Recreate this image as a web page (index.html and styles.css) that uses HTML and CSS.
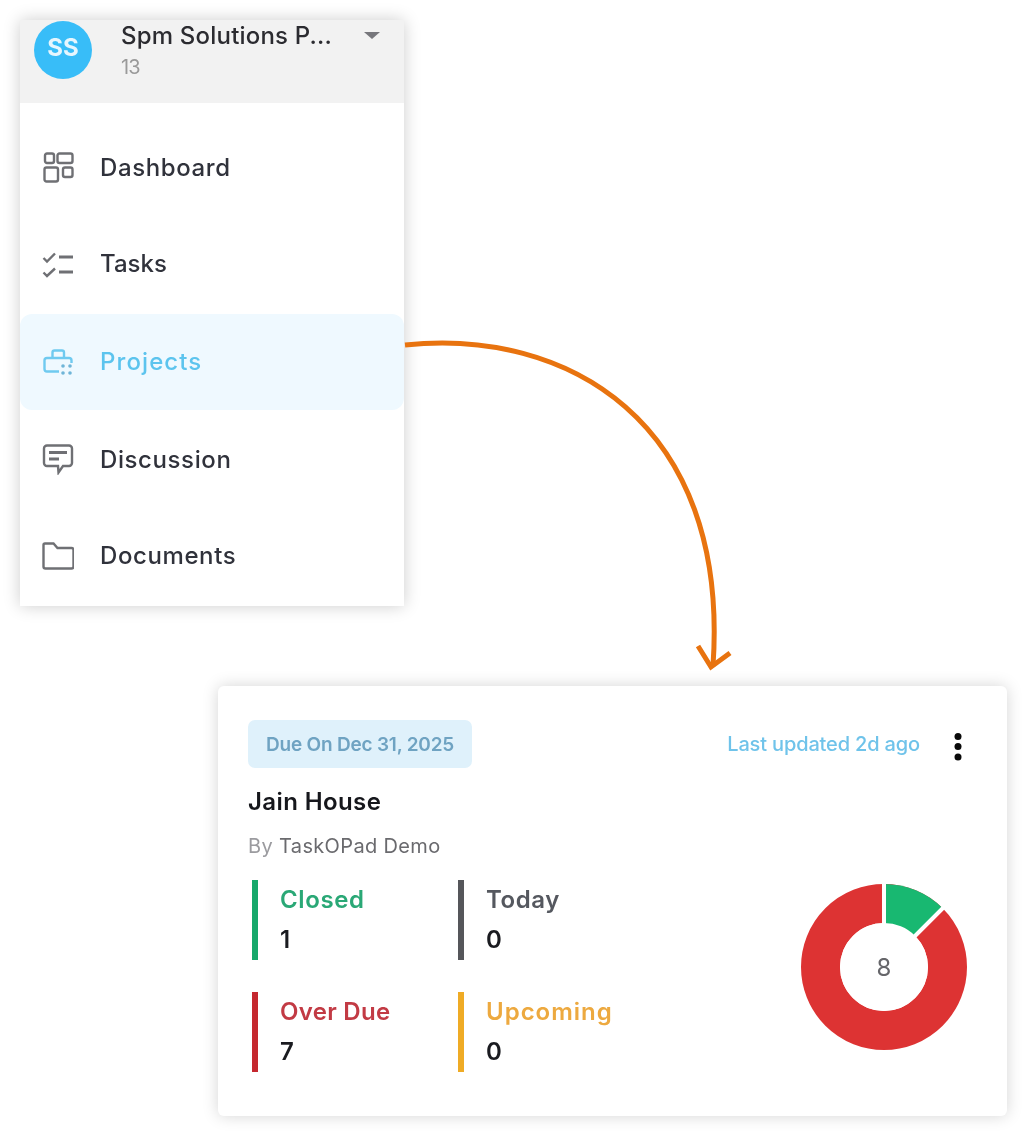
FILE: index.html
```html
<!DOCTYPE html>
<html lang="en">
<head>
<meta charset="utf-8">
<title>Projects</title>
<link rel="stylesheet" href="styles.css">
</head>
<body>
<main class="canvas">
  <aside class="sidebar">
    <header class="org">
      <div class="avatar">SS</div>
      <div class="org-text">
        <div class="org-name">Spm Solutions P...</div>
        <div class="org-id">13</div>
      </div>
      <svg class="caret" width="16" height="7" viewBox="0 0 16 7"><path d="M0 0H16L8 7Z"/></svg>
    </header>
    <nav class="nav">
      <a class="nav-item">
        <svg class="icon" width="32" height="32" viewBox="0 0 32 32"><rect x="3" y="2.500" width="9" height="9.500" rx="2"/><rect x="15.500" y="2.500" width="15" height="9.500" rx="2"/><rect x="2.500" y="16.500" width="13.500" height="14" rx="2"/><rect x="21" y="16.500" width="9.500" height="9.500" rx="2"/></svg>
        <span>Dashboard</span>
      </a>
      <a class="nav-item tasks">
        <svg class="icon" width="32" height="32" viewBox="0 0 32 32"><path d="M1.500 11l3.500 3.500L13 6.500M1.500 25.500l3.500 3.500L13 21.500"/><path class="thick" d="M17 10H31M17 25H31"/></svg>
        <span>Tasks</span>
      </a>
      <a class="nav-item active">
        <svg class="icon" width="32" height="32" viewBox="0 0 32 32"><path d="M17 26.500H5a2.500 2.500 0 0 1-2.500-2.500V15.500A2.500 2.500 0 0 1 5 13H27A2.500 2.500 0 0 1 29.500 15.500V18M10.500 13V7.500A2 2 0 0 1 12.500 5.500H20A2 2 0 0 1 22 7.500V13"/><g class="dots"><circle cx="21" cy="21" r="1.800"/><circle cx="28" cy="21" r="1.800"/><circle cx="21" cy="28" r="1.800"/><circle cx="28" cy="28" r="1.800"/></g></svg>
        <span>Projects</span>
      </a>
      <a class="nav-item after-active">
        <svg class="icon" width="32" height="32" viewBox="0 0 32 32"><path d="M5 2.500H27A3 3 0 0 1 30 5.500V20A3 3 0 0 1 27 23H21L16.500 29.500L16 23H5A3 3 0 0 1 2 20V5.500A3 3 0 0 1 5 2.500Z"/><path class="thick" d="M7 9.500H25M7 16H17"/></svg>
        <span>Discussion</span>
      </a>
      <a class="nav-item">
        <svg class="icon" width="32" height="32" viewBox="0 0 32 32"><path d="M1.500 6V27.500A2 2 0 0 0 3.500 29.500H29.500A2 2 0 0 0 31.500 27.500V11A2 2 0 0 0 29.500 9H15.500L11.500 4.500H3A1.500 1.500 0 0 0 1.500 6Z"/></svg>
        <span>Documents</span>
      </a>
    </nav>
  </aside>

  <svg class="arrow" width="1028" height="1136" viewBox="0 0 1028 1136">
    <path d="M405 345C565 328 730 420 713 666"/>
    <path d="M698 646L711 667L730 653"/>
  </svg>

  <article class="card">
    <div class="card-top">
      <span class="due">Due On Dec 31, 2025</span>
      <div class="card-meta">
        <span class="updated">Last updated 2d ago</span>
        <svg class="kebab" width="8" height="28" viewBox="0 0 8 28"><circle cx="4" cy="3.500" r="3.500"/><circle cx="4" cy="13.500" r="3.500"/><circle cx="4" cy="24" r="3.500"/></svg>
      </div>
    </div>
    <h2 class="title">Jain House</h2>
    <p class="by"><span class="by-word">By</span> TaskOPad Demo</p>
    <div class="card-body">
      <div class="stats">
        <div class="stat closed"><div class="label">Closed</div><div class="value">1</div></div>
        <div class="stat today"><div class="label">Today</div><div class="value">0</div></div>
        <div class="stat overdue"><div class="label">Over Due</div><div class="value">7</div></div>
        <div class="stat upcoming"><div class="label">Upcoming</div><div class="value">0</div></div>
      </div>
      <div class="donut">
        <svg width="168" height="170" viewBox="0 0 168 170">
          <circle class="ring" cx="84" cy="85" r="63.500"/>
          <path class="slice" d="M84 85V2A83 83 0 0 1 142.700 26.300Z"/>
          <path class="gap" d="M84 85V-2M84 85L147 22"/>
          <circle class="hole" cx="84" cy="85" r="44"/>
        </svg>
        <span class="donut-num">8</span>
      </div>
    </div>
  </article>
</main>
</body>
</html>
```

FILE: styles.css
```css
* { box-sizing: border-box; }
html, body { margin: 0; padding: 0; background: #fff; }
body { font-family: Inter, "Noto Sans", "Liberation Sans", sans-serif; }

.canvas {
  position: relative;
  width: 1028px;
  height: 1136px;
  padding: 20px 0 0 20px;
  filter: blur(0.5px);
  overflow: hidden;
}

/* sidebar */
.sidebar {
  width: 384px;
  height: 586px;
  background: #fff;
  box-shadow: 0 0 16px rgba(0, 0, 0, .2);
}
.org {
  height: 83px;
  background: #f2f2f2;
  display: flex;
  align-items: flex-start;
  padding-left: 14px;
}
.avatar {
  width: 58px;
  height: 58px;
  margin-top: 1px;
  padding-bottom: 5px;
  border-radius: 50%;
  background: #38bdf8;
  color: #e6f6fe;
  font-size: 24px;
  font-weight: 700;
  display: flex;
  align-items: center;
  justify-content: center;
}
.org-text { margin-left: 29px; width: 243px; }
.org-name {
  margin-top: 1px;
  font-size: 24px;
  line-height: 29px;
  font-weight: 500;
  color: #2b2b30;
  letter-spacing: 0.2px;
  white-space: nowrap;
}
.org-id {
  margin-top: 4px;
  font-size: 20px;
  line-height: 26px;
  color: #9a9a9a;
  letter-spacing: -1px;
}
.caret { margin-top: 12px; fill: #77777c; }

.nav { padding-top: 16px; }
.nav-item {
  height: 96px;
  display: flex;
  align-items: center;
  gap: 26px;
  padding-left: 22px;
  font-size: 24px;
  font-weight: 500;
  color: #30323b;
  letter-spacing: 0.6px;
}
.tasks { letter-spacing: 0; }
.active {
  margin-top: 3px;
  padding-bottom: 2px;
  background: #eff9ff;
  border-radius: 12px;
  color: #5cc4ee;
  letter-spacing: 1.1px;
}
.after-active { margin-top: 1px; }
.icon { flex: none; fill: none; stroke: #6f7074; stroke-width: 2.400; }
.icon .thick { stroke-width: 3; }
.active .icon { stroke: #6fcaf0; }
.active .icon .dots { fill: #6fb5d8; stroke: none; }

/* arrow */
.arrow {
  position: absolute;
  left: 0;
  top: 0;
  fill: none;
  stroke: #e8730f;
  stroke-width: 5;
}

/* card */
.card {
  width: 789px;
  height: 430px;
  margin: 80px 0 0 198px;
  background: #fff;
  border-radius: 6px;
  box-shadow: 0 0 16px rgba(0, 0, 0, .17);
  padding: 34px 45px 0 30px;
}
.card-top { display: flex; justify-content: space-between; align-items: flex-start; }
.due {
  width: 224px;
  height: 48px;
  border-radius: 7px;
  background: #dff1fb;
  color: #6fa3c2;
  font-size: 19px;
  font-weight: 600;
  letter-spacing: -0.2px;
  display: flex;
  align-items: center;
  justify-content: center;
}
.card-meta { display: flex; align-items: flex-start; gap: 34px; padding-top: 11px; }
.updated {
  color: #6fc3ea;
  font-size: 20px;
  line-height: 26px;
  font-weight: 500;
  letter-spacing: -0.15px;
}
.kebab { fill: #0a0a0a; margin-top: 2px; }
.title {
  margin: 19px 0 0;
  font-size: 24px;
  line-height: 30px;
  font-weight: 600;
  color: #16171c;
  letter-spacing: 0.4px;
}
.by {
  margin: 16px 0 0;
  font-size: 20px;
  line-height: 26px;
  color: #6a6a6e;
  letter-spacing: 0.35px;
}
.by-word { color: #9b9b9f; }
.card-body { display: flex; justify-content: space-between; margin-top: 21px; padding-left: 4px; }
.stats {
  display: grid;
  grid-template-columns: repeat(2, 206px);
  grid-auto-rows: 80px;
  row-gap: 32px;
}
.stat { border-left: 6px solid; padding-left: 22px; }
.label { font-size: 24px; line-height: 40px; font-weight: 600; letter-spacing: 0.6px; }
.value { font-size: 24px; line-height: 40px; font-weight: 600; color: #1a1b20; }
.closed { border-color: #17a86b; }
.closed .label { color: #2aa876; }
.today { border-color: #55565a; }
.today .label { color: #55585f; }
.overdue { border-color: #c5282f; }
.overdue .label { color: #c23a44; letter-spacing: 0.3px; }
.upcoming { border-color: #efab25; }
.upcoming .label { color: #eda93f; letter-spacing: 1px; }

.donut { position: relative; width: 168px; height: 170px; margin: 2px -6px 0 0; }
.donut svg { display: block; overflow: visible; }
.ring { fill: none; stroke: #dd3333; stroke-width: 39; }
.slice { fill: #18b871; }
.gap { fill: none; stroke: #fff; stroke-width: 4; }
.hole { fill: #fff; }
.donut-num {
  position: absolute;
  left: 0;
  right: 0;
  top: 71px;
  text-align: center;
  font-size: 24px;
  line-height: 30px;
  color: #66666a;
}
```
